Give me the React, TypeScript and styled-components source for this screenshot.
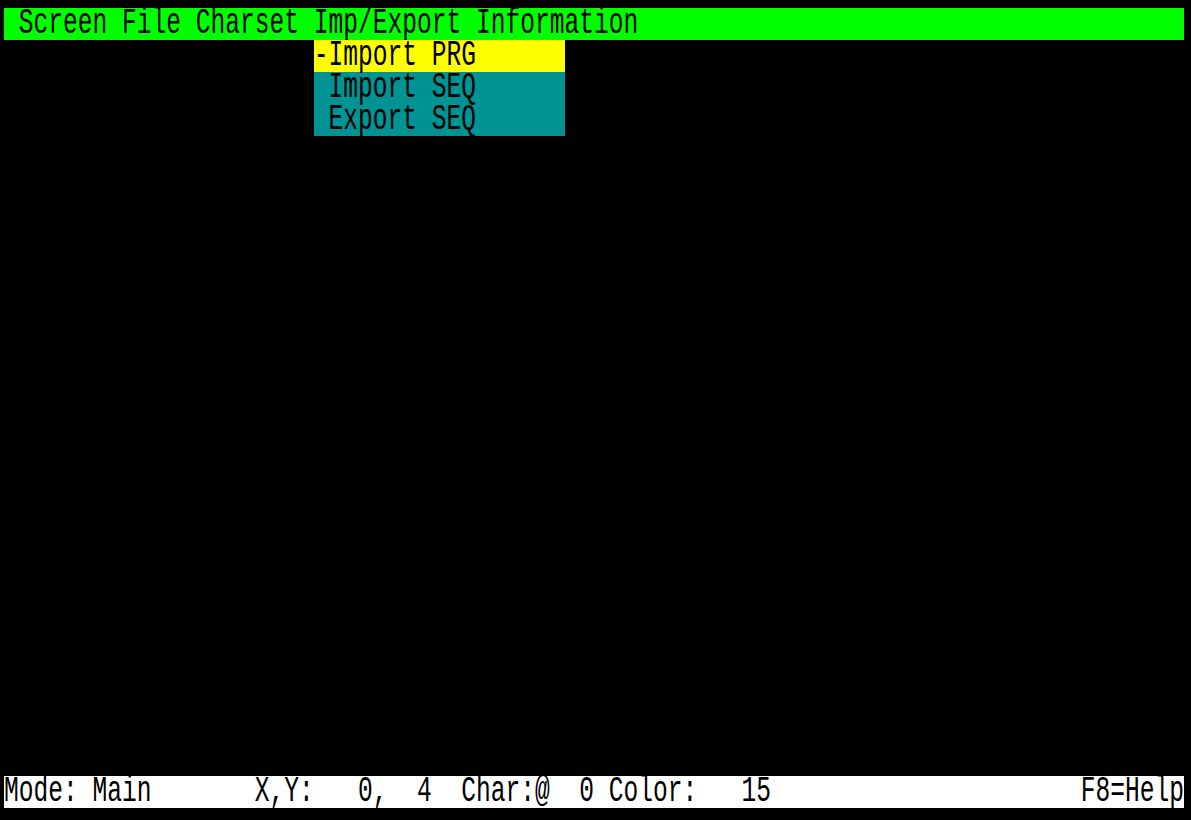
import React from "react";
import styled, { createGlobalStyle } from "styled-components";

const CELL_W = 14.75;
const CELL_H = 32;
const SCALE_Y = 1.5;
const TEXT_H = 20.5;

const GlobalStyle = createGlobalStyle`
  html, body {
    margin: 0;
    padding: 0;
    background: #000;
    height: 100%;
  }
  body {
    font-family: "Liberation Mono", "DejaVu Sans Mono", monospace;
  }
`;

const Page = styled.div`
  width: 1191px;
  height: 820px;
  background: #000;
  padding: 8px 0 0 4px;
  box-sizing: border-box;
  overflow: hidden;
`;

const Screen = styled.div`
  position: relative;
  width: ${80 * CELL_W}px;
  height: ${25 * CELL_H}px;
  display: grid;
  grid-template-rows: ${CELL_H}px 1fr ${CELL_H}px;
  background: #000;
`;

const Bar = styled.div<{ $bg: string }>`
  display: flex;
  justify-content: space-between;
  align-items: flex-start;
  height: ${CELL_H}px;
  box-sizing: border-box;
  padding-top: 1.25px;
  background: ${(p) => p.$bg};
`;

const Text = styled.span`
  display: inline-block;
  white-space: pre;
  font-family: "Liberation Mono", "DejaVu Sans Mono", monospace;
  font-size: 24.58px;
  line-height: ${TEXT_H}px;
  height: ${TEXT_H}px;
  color: #000;
  transform-origin: 0 0;
  transform: scaleY(${SCALE_Y});
`;

const Workspace = styled.div`
  background: #000;
`;

const Dropdown = styled.div`
  position: absolute;
  left: ${21 * CELL_W}px;
  top: ${CELL_H}px;
  width: ${17 * CELL_W}px;
  display: flex;
  flex-direction: column;
`;

const MenuItem = styled.div<{ $active?: boolean }>`
  height: ${CELL_H}px;
  box-sizing: border-box;
  padding-top: 1.25px;
  background: ${(p) => (p.$active ? "#ffff00" : "#009393")};
`;

const menuTitles = " Screen File Charset Imp/Export Information";

const items = [
  { label: "-Import PRG", active: true },
  { label: " Import SEQ", active: false },
  { label: " Export SEQ", active: false },
];

const status =
  "Mode: Main" +
  "       " +
  "X,Y:" +
  "   " +
  "0," +
  "  " +
  "4" +
  "  " +
  "Char:@" +
  "  " +
  "0" +
  " Color:" +
  "   " +
  "15";

export default function App() {
  return (
    <>
      <GlobalStyle />
      <Page>
        <Screen>
          <Bar $bg="#00ff00">
            <Text>{menuTitles}</Text>
          </Bar>
          <Workspace />
          <Bar $bg="#ffffff">
            <Text>{status}</Text>
            <Text>F8=Help</Text>
          </Bar>
          <Dropdown>
            {items.map((it) => (
              <MenuItem key={it.label} $active={it.active}>
                <Text>{it.label}</Text>
              </MenuItem>
            ))}
          </Dropdown>
        </Screen>
      </Page>
    </>
  );
}
